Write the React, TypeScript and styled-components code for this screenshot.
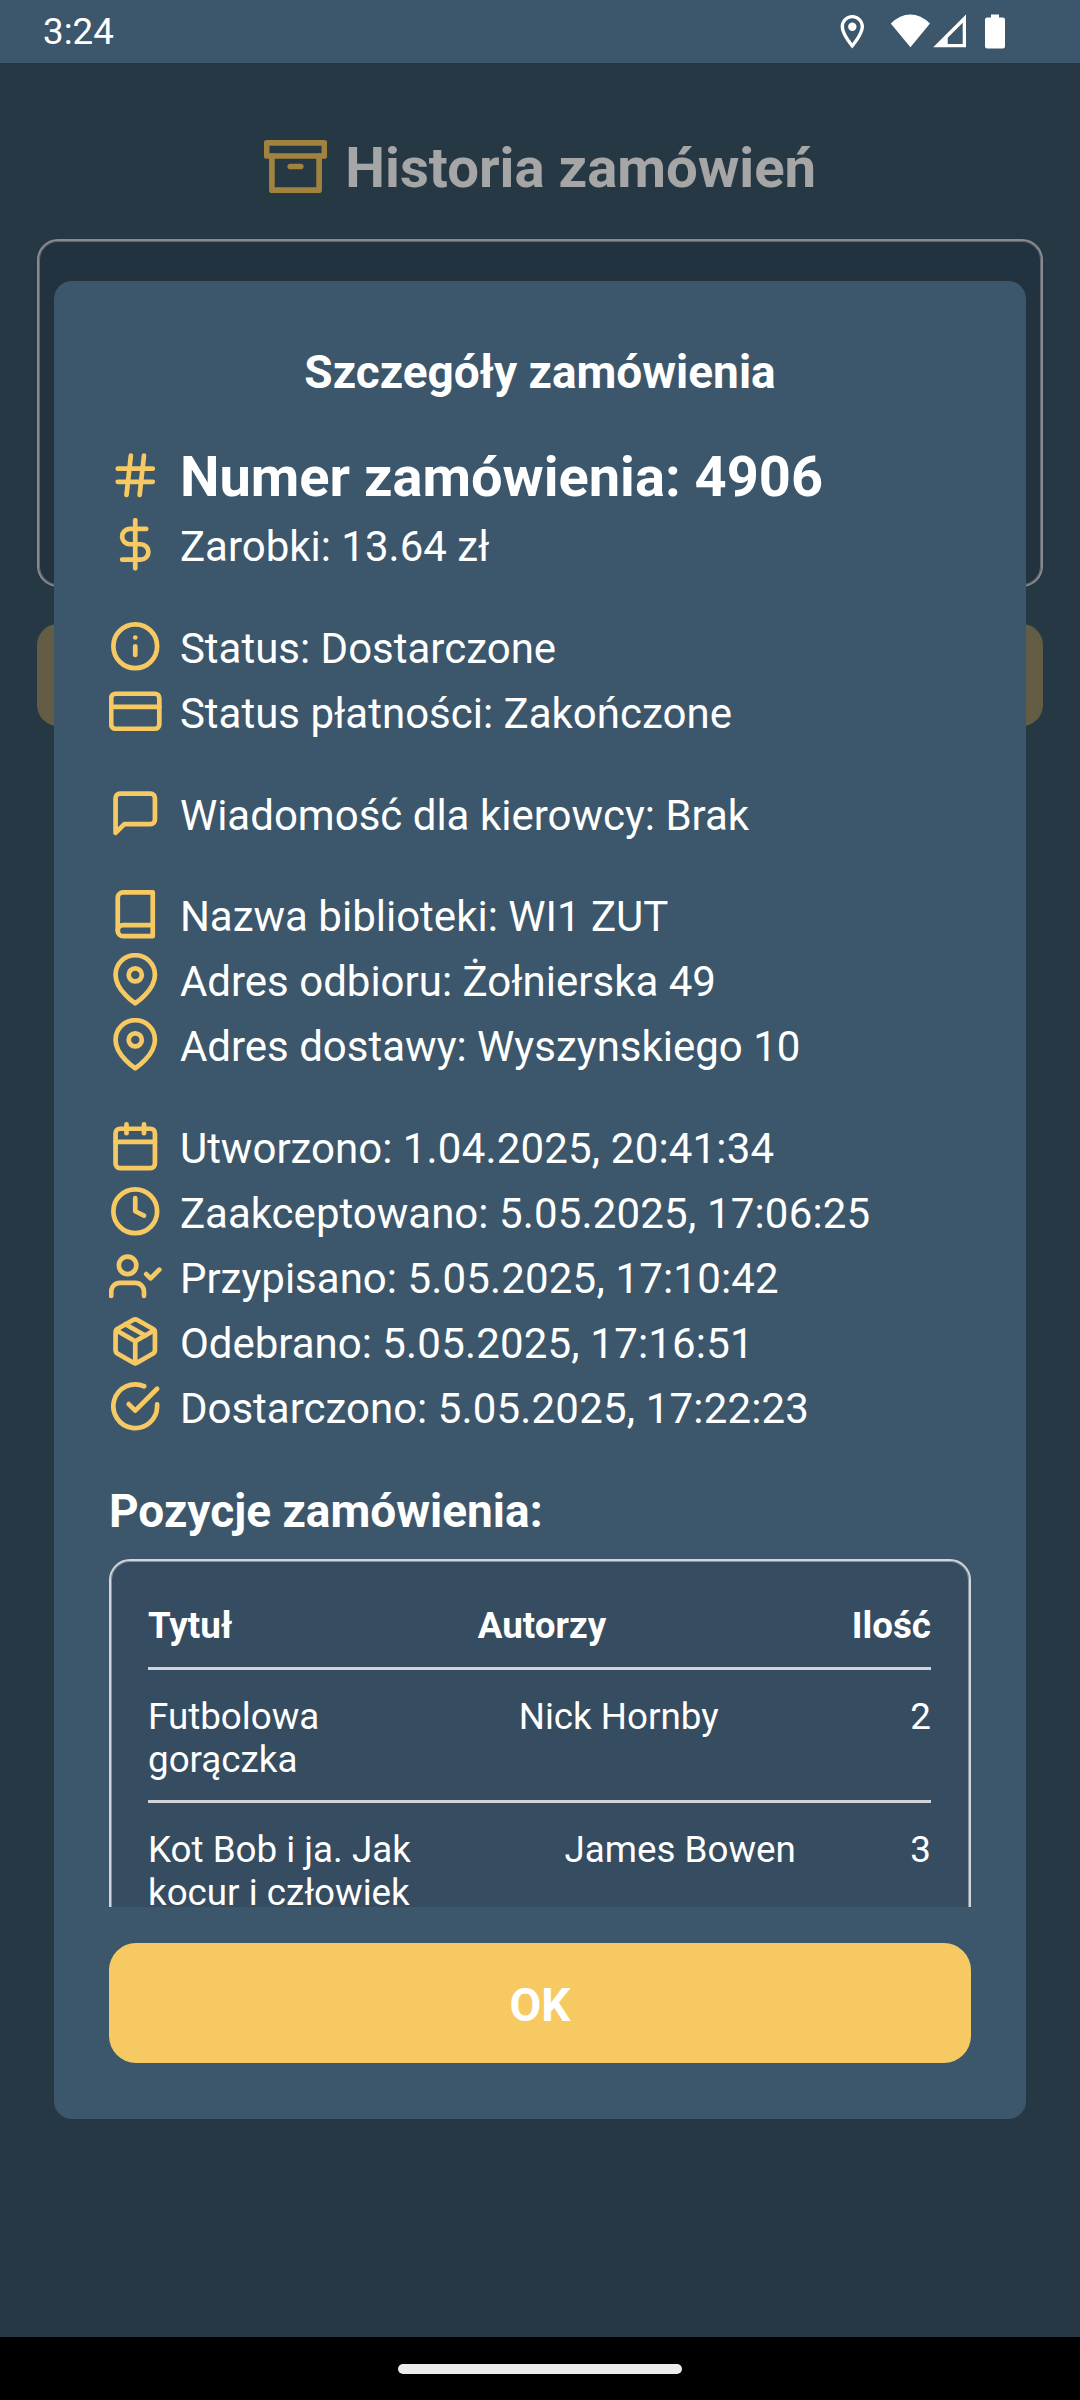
import React from "react";
import styled, { createGlobalStyle } from "styled-components";
import type { IconType } from "react-icons";
import {
  FiArchive,
  FiHash,
  FiDollarSign,
  FiInfo,
  FiCreditCard,
  FiMessageSquare,
  FiBook,
  FiMapPin,
  FiCalendar,
  FiClock,
  FiUserCheck,
  FiPackage,
  FiCheckCircle,
} from "react-icons/fi";

const color = {
  base: "#3c576b",
  accent: "#f7c963",
  line: "#d1d5db",
  panel: "#364d61",
  text: "#ffffff",
};

const GlobalStyle = createGlobalStyle`
  *, *::before, *::after { box-sizing: border-box; }
  html, body { margin: 0; background: #000; }
  body { font-family: Roboto, "Noto Sans", sans-serif; color: ${color.text}; }
`;

const Phone = styled.div`
  width: 1080px;
  height: 2400px;
  display: flex;
  flex-direction: column;
  overflow: hidden;
`;

const StatusBar = styled.header`
  flex: none;
  height: 63px;
  padding: 0 75px 0 43px;
  display: flex;
  align-items: center;
  justify-content: space-between;
  background: ${color.base};
`;

const Clock = styled.span`
  font-size: 36.75px;
  line-height: 43px;
  padding-bottom: 1px;
`;

const Screen = styled.main`
  position: relative;
  flex: 1;
  background: ${color.base};
`;

const Page = styled.div`
  padding: 61px 37px 0;
  display: flex;
  flex-direction: column;
`;

const PageTitle = styled.h1`
  margin: 0;
  height: 84px;
  display: flex;
  align-items: center;
  justify-content: center;
  gap: 18.4px;
  font-size: 56.3px;
  line-height: 68px;
  font-weight: 700;

  span { padding-top: 3px; }
  svg { color: ${color.accent}; stroke-width: 2.15; }
`;

const OrderCard = styled.section`
  margin-top: 31px;
  height: 348px;
  border: 2px solid ${color.line};
  border-radius: 21px;
  box-shadow: inset 0 0 0 1px rgba(209, 213, 219, 0.6);
  background: ${color.panel};
`;

const PageButton = styled.div`
  margin-top: 37px;
  height: 102px;
  border-radius: 21px;
  background: #998f6b;
`;

const Backdrop = styled.div`
  position: absolute;
  inset: 0;
  display: flex;
  justify-content: center;
  align-items: center;
  background: rgba(0, 0, 0, 0.35);
`;

const Dialog = styled.section`
  width: 972px;
  height: 1838px;
  padding: 56px 55px;
  display: flex;
  flex-direction: column;
  border-radius: 18px;
  background: ${color.base};
`;

const DialogTitle = styled.h2`
  margin: 7px 0 0;
  font-size: 46px;
  line-height: 56px;
  font-weight: 700;
  text-align: center;
`;

const Scroll = styled.div`
  margin-top: 37px;
  padding-top: 12px;
  flex: 1;
  min-height: 0;
  overflow: hidden;
`;

const Group = styled.div`
  margin-bottom: 36.75px;
`;

const InfoRow = styled.div<{ $large?: boolean }>`
  display: flex;
  gap: 18.4px;
  height: ${(p) => (p.$large ? 69 : 65)}px;
  font-size: ${(p) => (p.$large ? 56 : 42)}px;
  line-height: ${(p) => (p.$large ? 56 : 57)}px;
  font-weight: ${(p) => (p.$large ? 700 : 400)};
  white-space: nowrap;

  svg { flex: none; color: ${color.accent}; stroke-width: 2.15; }
`;

const Stamp = styled.span`
  letter-spacing: 0.18px;
`;

const SectionTitle = styled.h3`
  margin: 0;
  padding-top: 1px;
  font-size: 46px;
  line-height: 56px;
  font-weight: 700;
`;

const Table = styled.div`
  margin-top: 20px;
  height: 500px;
  padding: 37px 38px 37px 37px;
  border: 2px solid ${color.line};
  border-radius: 21px;
  box-shadow: inset 0 0 0 1px rgba(209, 213, 219, 0.5);
  background: ${color.panel};
`;

const TableRow = styled.div<{ $head?: boolean }>`
  display: flex;
  justify-content: space-between;
  align-items: flex-start;
  padding: ${(p) => (p.$head ? "6px 0 20px" : "25px 0 19px")};
  border-bottom: 3px solid ${color.line};
  font-size: 36.75px;
  line-height: 43px;
  font-weight: ${(p) => (p.$head ? 700 : 400)};
`;

const BookTitle = styled.span<{ $width: number }>`
  width: ${(p) => p.$width}px;
`;

const OkButton = styled.button`
  flex: none;
  margin-top: 36px;
  height: 120px;
  padding: 3px 0 0;
  border: 0;
  border-radius: 27px;
  background: ${color.accent};
  color: ${color.text};
  font: 700 46px/56px Roboto, "Noto Sans", sans-serif;
`;

const NavBar = styled.footer`
  flex: none;
  height: 63px;
  display: flex;
  align-items: center;
  justify-content: center;
  background: #000;
`;

const NavHandle = styled.div`
  width: 284px;
  height: 10px;
  border-radius: 5px;
  background: #ececec;
`;

const StatusIcons = () => (
  <svg width="165" height="36" viewBox="840 13.500 165 36" fill="#fff">
    <path
      fillRule="evenodd"
      d="M852.3 14.4c-6.5 0-11.7 5.2-11.7 11.7 0 8.7 11.7 21.9 11.7 21.9s11.7-13.2 11.7-21.9c0-6.500-5.200-11.700-11.700-11.700zM852.300 17.800c4.600 0 8.300 3.700 8.300 8.300 0 4.800-4.700 12.100-8.300 16.600-3.600-4.500-8.300-11.800-8.300-16.600 0-4.600 3.700-8.300 8.300-8.300z"
    />
    <circle cx="852.3" cy="26.300" r="4.200" />
    <path d="M890.800 23Q900 14 910.400 14T930 23L910.400 46.700z" />
    <path fillRule="evenodd" d="M933.200 46.700L966 14V46.700zM947.700 43.500H962.700V22.200L947.700 37.200z" />
    <path d="M991 14h8v3h3.800q2.200 0 2.200 2.200v26.600q0 2.200-2.200 2.200h-15.600q-2.200 0-2.200-2.200V19.200q0-2.200 2.200-2.200h3.800z" />
  </svg>
);

type Info = { icon: IconType; text: string; stamp?: string; large?: boolean };

const groups: Info[][] = [
  [
    { icon: FiHash, text: "Numer zamówienia: 4906", large: true },
    { icon: FiDollarSign, text: "Zarobki: 13.64 zł" },
  ],
  [
    { icon: FiInfo, text: "Status: Dostarczone" },
    { icon: FiCreditCard, text: "Status płatności: Zakończone" },
  ],
  [{ icon: FiMessageSquare, text: "Wiadomość dla kierowcy: Brak" }],
  [
    { icon: FiBook, text: "Nazwa biblioteki: WI1 ZUT" },
    { icon: FiMapPin, text: "Adres odbioru: Żołnierska 49" },
    { icon: FiMapPin, text: "Adres dostawy: Wyszynskiego 10" },
  ],
  [
    { icon: FiCalendar, text: "Utworzono: ", stamp: "1.04.2025, 20:41:34" },
    { icon: FiClock, text: "Zaakceptowano: ", stamp: "5.05.2025, 17:06:25" },
    { icon: FiUserCheck, text: "Przypisano: ", stamp: "5.05.2025, 17:10:42" },
    { icon: FiPackage, text: "Odebrano: ", stamp: "5.05.2025, 17:16:51" },
    { icon: FiCheckCircle, text: "Dostarczono: ", stamp: "5.05.2025, 17:22:23" },
  ],
];

const books = [
  { title: "Futbolowa gorączka", author: "Nick Hornby", count: 2, width: 179 },
  { title: "Kot Bob i ja. Jak kocur i człowiek", author: "James Bowen", count: 3, width: 302 },
];

export default function App() {
  return (
    <Phone>
      <GlobalStyle />
      <StatusBar>
        <Clock>3:24</Clock>
        <StatusIcons />
      </StatusBar>
      <Screen>
        <Page>
          <PageTitle>
            <FiArchive size={63} />
            <span>Historia zamówień</span>
          </PageTitle>
          <OrderCard />
          <PageButton />
        </Page>
        <Backdrop>
          <Dialog>
            <DialogTitle>Szczegóły zamówienia</DialogTitle>
            <Scroll>
              {groups.map((rows, i) => (
                <Group key={i}>
                  {rows.map(({ icon: Icon, text, stamp, large }) => (
                    <InfoRow key={text} $large={large}>
                      <Icon size={52.5} />
                      <span>
                        {text}
                        {stamp && <Stamp>{stamp}</Stamp>}
                      </span>
                    </InfoRow>
                  ))}
                </Group>
              ))}
              <SectionTitle>Pozycje zamówienia:</SectionTitle>
              <Table>
                <TableRow $head>
                  <span>Tytuł</span>
                  <span>Autorzy</span>
                  <span>Ilość</span>
                </TableRow>
                {books.map((b) => (
                  <TableRow key={b.title}>
                    <BookTitle $width={b.width}>{b.title}</BookTitle>
                    <span>{b.author}</span>
                    <span>{b.count}</span>
                  </TableRow>
                ))}
              </Table>
            </Scroll>
            <OkButton>OK</OkButton>
          </Dialog>
        </Backdrop>
      </Screen>
      <NavBar>
        <NavHandle />
      </NavBar>
    </Phone>
  );
}
